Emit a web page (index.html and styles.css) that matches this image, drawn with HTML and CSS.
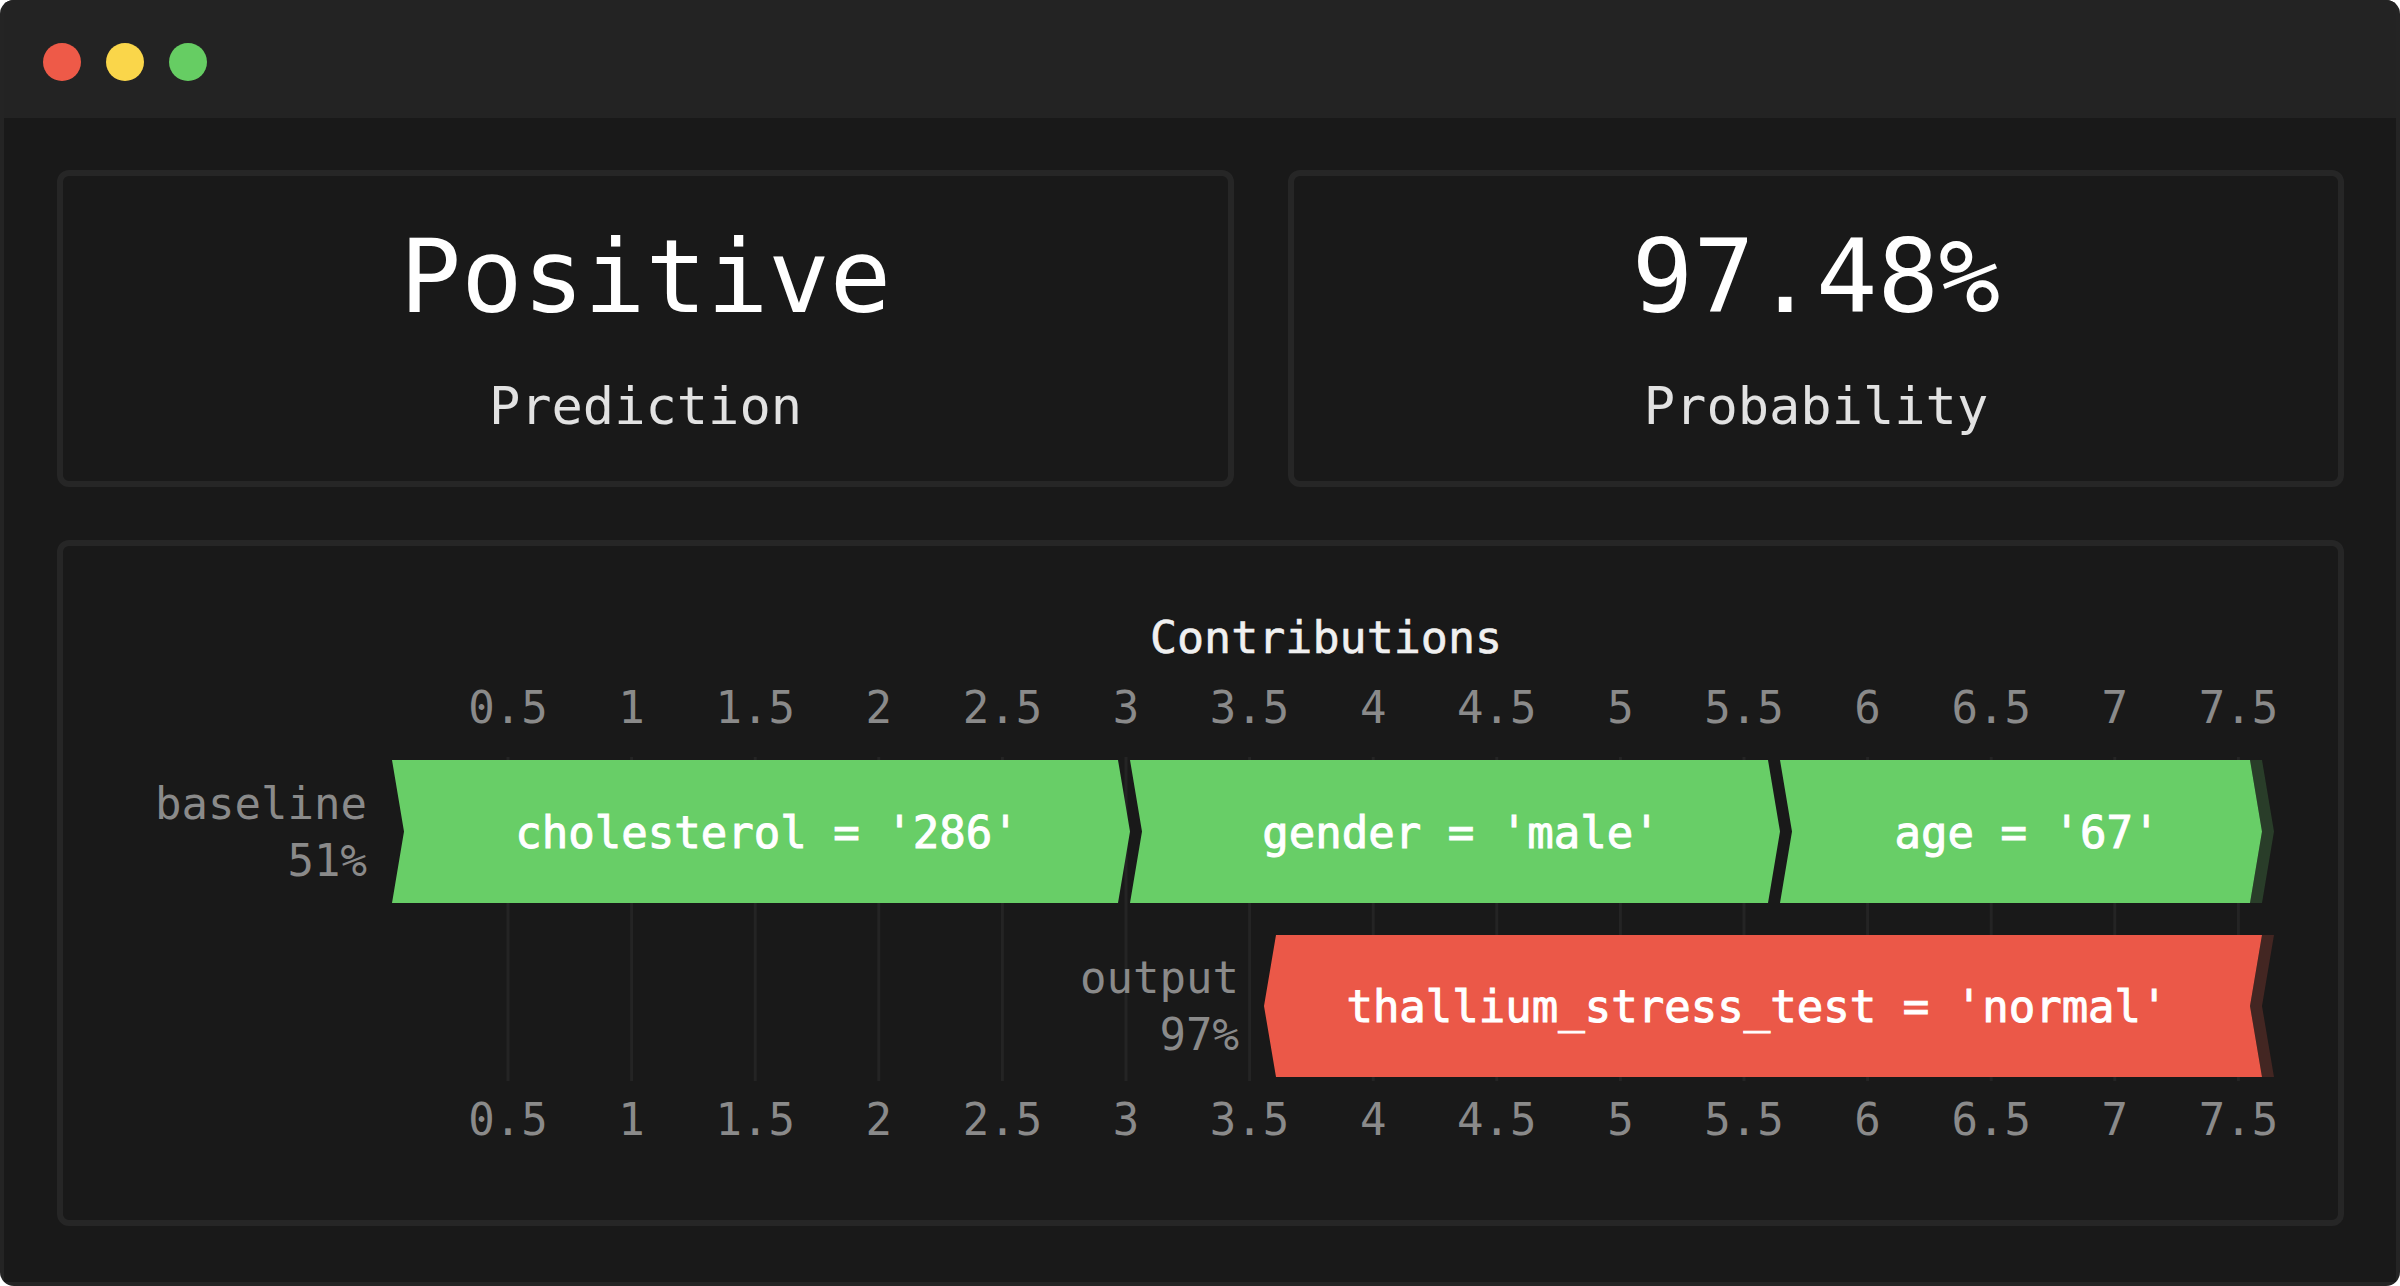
FILE: index.html
```html
<!DOCTYPE html>
<html lang="en">
<head>
<meta charset="utf-8">
<title>Prediction</title>
<link rel="stylesheet" href="styles.css">
</head>
<body>
<div class="window">
  <div class="titlebar">
    <span class="dot dot-red"></span>
    <span class="dot dot-yellow"></span>
    <span class="dot dot-green"></span>
  </div>
  <div class="content">
    <div class="stats">
      <div class="card stat">
        <div class="stat-value">Positive</div>
        <div class="stat-label">Prediction</div>
      </div>
      <div class="card stat">
        <div class="stat-value">97.48%</div>
        <div class="stat-label">Probability</div>
      </div>
    </div>
    <div class="card chart">
      <svg class="plot" width="2275" height="674" viewBox="63 546 2275 674" xmlns="http://www.w3.org/2000/svg">
        <text class="axis-title" x="1326" y="653">Contributions</text>

        <g class="grid">
          <line x1="508" y1="757" x2="508" y2="1081"/>
          <line x1="631.6" y1="757" x2="631.6" y2="1081"/>
          <line x1="755.2" y1="757" x2="755.2" y2="1081"/>
          <line x1="878.8" y1="757" x2="878.8" y2="1081"/>
          <line x1="1002.4" y1="757" x2="1002.4" y2="1081"/>
          <line x1="1126" y1="757" x2="1126" y2="1081"/>
          <line x1="1249.6" y1="757" x2="1249.6" y2="1081"/>
          <line x1="1373.2" y1="757" x2="1373.2" y2="1081"/>
          <line x1="1496.8" y1="757" x2="1496.8" y2="1081"/>
          <line x1="1620.4" y1="757" x2="1620.4" y2="1081"/>
          <line x1="1744" y1="757" x2="1744" y2="1081"/>
          <line x1="1867.6" y1="757" x2="1867.6" y2="1081"/>
          <line x1="1991.2" y1="757" x2="1991.2" y2="1081"/>
          <line x1="2114.8" y1="757" x2="2114.8" y2="1081"/>
          <line x1="2238.4" y1="757" x2="2238.4" y2="1081"/>
        </g>

        <g class="ticks">
          <text x="508" y="723">0.5</text>
          <text x="631.6" y="723">1</text>
          <text x="755.2" y="723">1.5</text>
          <text x="878.8" y="723">2</text>
          <text x="1002.4" y="723">2.5</text>
          <text x="1126" y="723">3</text>
          <text x="1249.6" y="723">3.5</text>
          <text x="1373.2" y="723">4</text>
          <text x="1496.8" y="723">4.5</text>
          <text x="1620.4" y="723">5</text>
          <text x="1744" y="723">5.5</text>
          <text x="1867.6" y="723">6</text>
          <text x="1991.2" y="723">6.5</text>
          <text x="2114.8" y="723">7</text>
          <text x="2238.4" y="723">7.5</text>
        </g>

        <g class="ticks">
          <text x="508" y="1135">0.5</text>
          <text x="631.6" y="1135">1</text>
          <text x="755.2" y="1135">1.5</text>
          <text x="878.8" y="1135">2</text>
          <text x="1002.4" y="1135">2.5</text>
          <text x="1126" y="1135">3</text>
          <text x="1249.6" y="1135">3.5</text>
          <text x="1373.2" y="1135">4</text>
          <text x="1496.8" y="1135">4.5</text>
          <text x="1620.4" y="1135">5</text>
          <text x="1744" y="1135">5.5</text>
          <text x="1867.6" y="1135">6</text>
          <text x="1991.2" y="1135">6.5</text>
          <text x="2114.8" y="1135">7</text>
          <text x="2238.4" y="1135">7.5</text>
        </g>

        <polygon class="pos-shadow" points="2250,760 2262,760 2274,831.5 2262,903 2250,903 2262,831.5"/>
        <polygon class="pos" points="392,760 1118,760 1130,831.5 1118,903 392,903 404,831.5"/>
        <polygon class="pos" points="1130,760 1768,760 1780,831.5 1768,903 1130,903 1142,831.5"/>
        <polygon class="pos" points="1780,760 2250,760 2262,831.5 2250,903 1780,903 1792,831.5"/>

        <polygon class="neg-shadow" points="2262,935 2274,935 2262,1006 2274,1077 2262,1077 2250,1006"/>
        <polygon class="neg" points="1276,935 2262,935 2250,1006 2262,1077 1276,1077 1264,1006"/>

        <text class="bar-label" x="767" y="848">cholesterol = '286'</text>
        <text class="bar-label" x="1461" y="848">gender = 'male'</text>
        <text class="bar-label" x="2027" y="848">age = '67'</text>
        <text class="bar-label" x="1757" y="1022">thallium_stress_test = 'normal'</text>

        <text class="side-label" x="367" y="819">baseline</text>
        <text class="side-label" x="367" y="876">51%</text>
        <text class="side-label" x="1239" y="993">output</text>
        <text class="side-label" x="1239" y="1050">97%</text>
      </svg>
    </div>
  </div>
</div>
</body>
</html>
```

FILE: styles.css
```css
html, body {
  margin: 0;
  padding: 0;
  background: #ffffff;
}

body {
  width: 2400px;
  height: 1286px;
  overflow: hidden;
  font-family: "DejaVu Sans Mono", "Liberation Mono", monospace;
}

.window {
  width: 2400px;
  height: 1286px;
  box-sizing: border-box;
  background: #242424;
  border-radius: 14px;
  padding: 0 4px 4px 4px;
  display: flex;
  flex-direction: column;
  overflow: hidden;
}

.titlebar {
  height: 118px;
  flex: 0 0 118px;
  box-sizing: border-box;
  padding: 43px 0 0 39px;
  display: flex;
  align-items: flex-start;
  gap: 25px;
  background: #232323;
}

.dot {
  width: 38px;
  height: 38px;
  border-radius: 50%;
  display: block;
}

.dot-red { background: #ee5a48; }
.dot-yellow { background: #fad64a; }
.dot-green { background: #66cd63; }

.content {
  flex: 1;
  background: #191919;
  box-sizing: border-box;
  padding: 52px 52px 56px 53px;
  display: flex;
  flex-direction: column;
  gap: 53px;
}

.stats {
  display: grid;
  grid-template-columns: 1177fr 1056fr;
  gap: 54px;
  height: 317px;
  flex: 0 0 317px;
}

.card {
  box-sizing: border-box;
  border: 6px solid #262626;
  border-radius: 12px;
  background: #191919;
}

.stat {
  display: flex;
  flex-direction: column;
  align-items: center;
  justify-content: center;
}

.stat-value {
  font-size: 102px;
  line-height: 102px;
  color: #ffffff;
}

.stat-label {
  margin-top: 52px;
  font-size: 52px;
  line-height: 52px;
  color: #e2e2e2;
}

.chart {
  flex: 1;
  overflow: hidden;
}

.plot {
  display: block;
  font-family: "DejaVu Sans Mono", "Liberation Mono", monospace;
}

.axis-title {
  fill: #f0f0f0;
  stroke: #f0f0f0;
  stroke-width: 0.6px;
  font-size: 45px;
  text-anchor: middle;
}

.ticks text {
  fill: #8a8a8a;
  font-size: 44px;
  text-anchor: middle;
}

.grid line {
  stroke: #242424;
  stroke-width: 3;
}

.pos { fill: #68ce67; }
.pos-shadow { fill: #293d29; }
.neg { fill: #eb5848; }
.neg-shadow { fill: #432622; }

.bar-label {
  fill: #ffffff;
  stroke: #ffffff;
  stroke-width: 1px;
  font-size: 44px;
  text-anchor: middle;
}

.side-label {
  fill: #8a8a8a;
  font-size: 44px;
  text-anchor: end;
}
```
